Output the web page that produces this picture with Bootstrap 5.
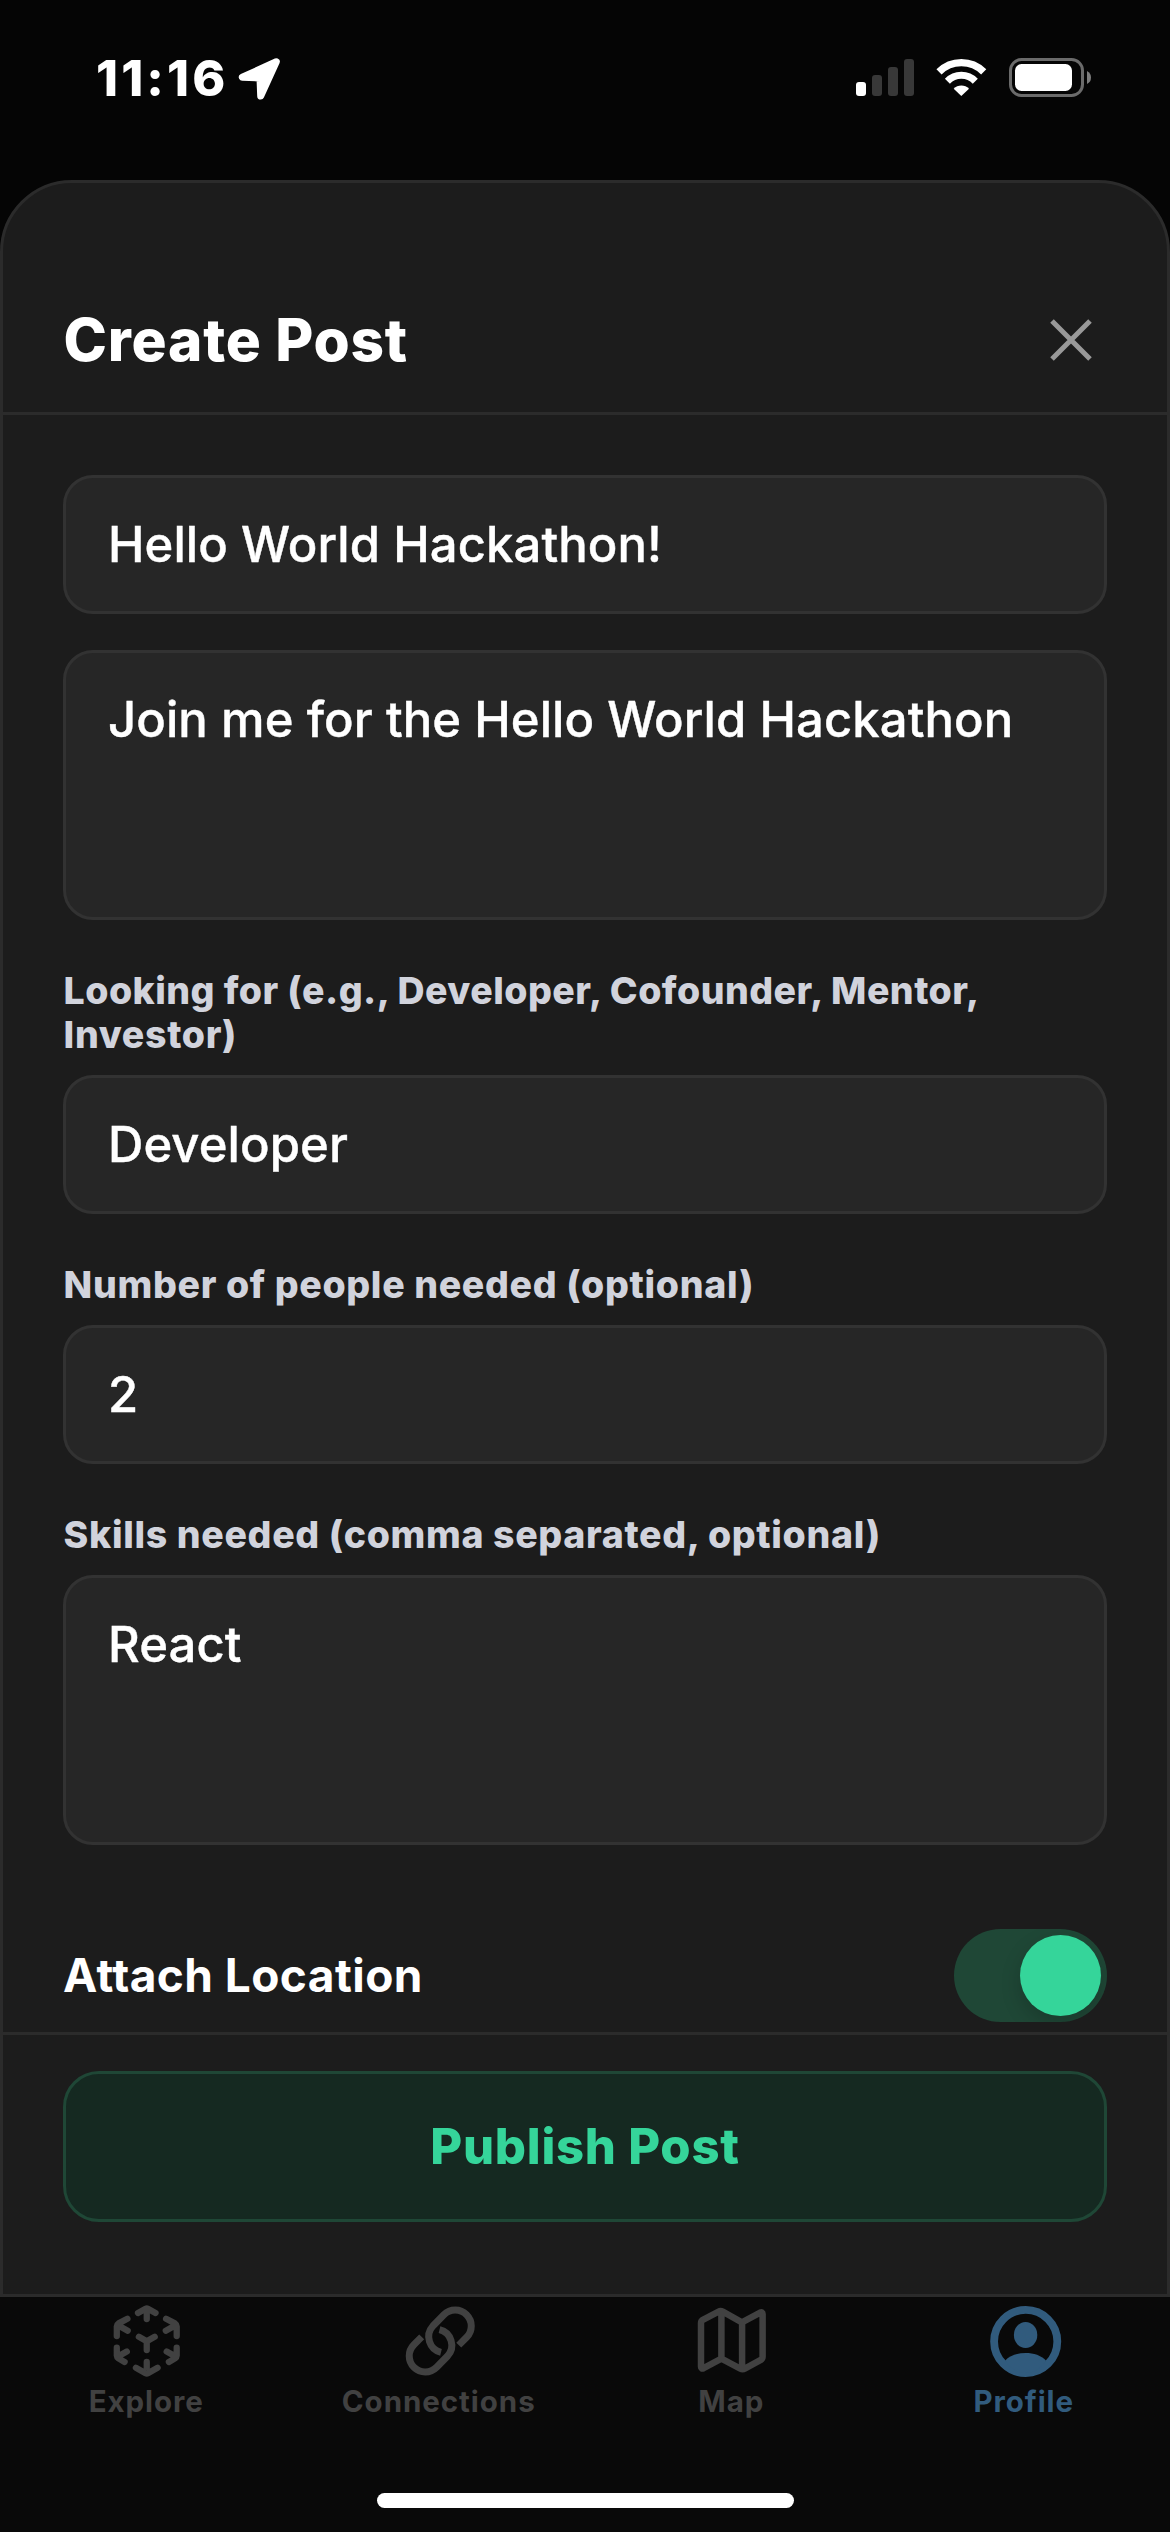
<!DOCTYPE html>
<html lang="en">
<head>
<meta charset="utf-8">
<meta name="viewport" content="width=device-width, initial-scale=1">
<title>Create Post</title>
<link rel="stylesheet" href="https://cdn.jsdelivr.net/npm/bootstrap@5.3.0/dist/css/bootstrap.min.css">
<style>
  body { background: #050505; font-family: Inter, "Liberation Sans", sans-serif; color: #fff; height: 2532px; overflow: hidden; }
  svg { display: block; flex: none; }
  .status-bar { height: 180px; padding: 48px 79px 0 96px; }
  .status-row { height: 60px; }
  .clock { font-size: 50px; line-height: 60px; font-weight: 800; letter-spacing: 3.1px; }
  .nav-arrow { margin-left: 9.5px; }
  .sheet { height: 2117px; background: #1c1c1c; border: 3px solid #2b2b2b; border-radius: 72px 72px 0 0; }
  .sheet-head { height: 232px; padding: 84px 75px 0 60.5px; border-bottom: 3px solid #2b2b2b; }
  .sheet-title { font-size: 58.5px; line-height: 72px; font-weight: 800; letter-spacing: .77px; }
  .sheet-body { padding: 60px 60px 0; height: 1617px; }
  .sheet-body .form-control { background: #262626; color: #fff; border: 3px solid #323232; border-radius: 30px; font-size: 49px; line-height: 59px; font-weight: 500; letter-spacing: .08px; -webkit-text-stroke: .4px #fff; padding: 37px 42px; height: 139px; resize: none; overflow: hidden; }
  .sheet-body textarea.form-control { height: 270px; }
  .sheet-body .second { margin-top: 36px; }
  .sheet-body .form-label { display: block; margin: 49px 0 18px .6px; font-size: 37.5px; line-height: 44px; font-weight: 800; color: #d1d3dc; letter-spacing: .66px; }
  .form-label .tight { letter-spacing: .45px; }
  .attach-row { margin-top: 84px; }
  .attach-label { font-size: 46px; line-height: 56px; font-weight: 700; letter-spacing: .44px; padding-bottom: 2px; }
  .toggle { width: 153px; height: 93px; padding: 6px; border-radius: 46.5px; background: #1f4736; overflow: hidden; }
  .toggle-knob { width: 81px; height: 81px; border-radius: 50%; background: #35d59a; box-shadow: 0 8px 20px rgba(0,0,0,.18); }
  .sheet-foot { border-top: 3px solid #2b2b2b; padding: 36px 60px 0; }
  .publish { height: 151px; border: 3px solid #1f4736; border-radius: 36px; background: #152921; color: #35d59a; font-size: 49px; line-height: 60px; font-weight: 800; letter-spacing: .73px; padding: 0; }
  .tab-bar { height: 235px; background: #090909; }
  .tab-row { padding-top: 8px; color: #414141; height: 196px; }
  .tab-item { font-size: 29.5px; line-height: 36px; font-weight: 700; letter-spacing: .95px; gap: 6px; color: #414141; text-decoration: none; }
  .tab-item.current { color: #315b7d; }
  .home-bar { width: 417px; height: 15px; border-radius: 8px; background: #fff; }
</style>
</head>
<body>
<div class="status-bar">
  <div class="status-row d-flex align-items-center justify-content-between">
    <div class="d-flex align-items-center">
      <span class="clock">11:16</span>
      <svg class="nav-arrow" width="43" height="43" viewBox="0 0 43 43"><path d="M38.3 4.7L4.3 20.3L22 21L22.7 39Z" fill="#fff" stroke="#fff" stroke-width="7" stroke-linejoin="round"/></svg>
    </div>
    <svg width="235" height="40" viewBox="0 0 235 40">
      <rect x="0" y="24" width="10" height="14" rx="3" fill="#fff"/>
      <g fill="#383838"><rect x="16" y="17" width="10" height="21" rx="3"/><rect x="32" y="9" width="10" height="29" rx="3"/><rect x="48" y="1" width="10" height="37" rx="3"/></g>
      <g transform="translate(80 0)" fill="none" stroke="#fff"><path d="M3 13.8A31.7 31.7 0 0 1 47.7 13.8" stroke-width="7.3"/><path d="M11.4 23.2A19.4 19.4 0 0 1 39.3 23.2" stroke-width="7"/><path d="M17.7 30.7A10.5 10.5 0 0 1 33 30.7L25.3 38Z" fill="#fff" stroke="none"/></g>
      <rect x="154.5" y="1.5" width="72" height="36" rx="11" fill="none" stroke="#6b6b6b" stroke-width="3"/>
      <rect x="159" y="6" width="57" height="27" rx="6.5" fill="#fff"/>
      <path d="M231 13q4 2 4 6.5t-4 6.5z" fill="#7d7d7d"/>
    </svg>
  </div>
</div>

<main class="sheet d-flex flex-column">
  <header class="sheet-head d-flex align-items-center justify-content-between">
    <h1 class="sheet-title m-0">Create Post</h1>
    <svg width="42" height="42" viewBox="0 0 42 42"><path d="M2 2L40 40M40 2L2 40" stroke="#999" stroke-width="5"/></svg>
  </header>
  <form class="sheet-body">
    <input class="form-control" type="text" value="Hello World Hackathon!">
    <textarea class="form-control second">Join me for the Hello World Hackathon</textarea>
    <label class="form-label"><span class="tight">Looking for (e.g., Developer, Cofounder, Mentor,</span> Investor)</label>
    <input class="form-control" type="text" value="Developer">
    <label class="form-label">Number of people needed (optional)</label>
    <input class="form-control" type="text" value="2">
    <label class="form-label">Skills needed (comma separated, optional)</label>
    <textarea class="form-control">React</textarea>
    <div class="attach-row d-flex align-items-center justify-content-between">
      <span class="attach-label">Attach Location</span>
      <div class="toggle d-flex justify-content-end" role="switch" aria-checked="true"><div class="toggle-knob"></div></div>
    </div>
  </form>
  <footer class="sheet-foot">
    <button class="publish btn w-100 d-flex align-items-center justify-content-center" type="button">Publish Post</button>
  </footer>
</main>

<nav class="tab-bar d-flex flex-column align-items-center">
  <div class="tab-row row g-0 w-100 text-center">
    <a class="tab-item col-3 d-flex flex-column align-items-center">
      <svg width="72" height="72" viewBox="0 0 72 72" fill="none" stroke="currentColor" stroke-width="6.3" stroke-linecap="round" stroke-linejoin="round">
        <path d="M28 8L35.6 3.7Q36.75 3.1 37.9 3.7L45.5 8M36.75 4V14"/>
        <path d="M17.4 13.7L8.6 18.4Q6.9 19.5 6.8 21.5V31M8 20.3L17.7 25.7"/>
        <path d="M56.1 13.7L64.9 18.4Q66.6 19.5 66.7 21.5V31M65.5 20.3L55.8 25.7"/>
        <path d="M6.8 42.7V50.6Q6.9 52.4 8.4 53.4L14.6 57M8 51.5L16.8 46.5"/>
        <path d="M66.7 42.7V50.6Q66.6 52.4 65.1 53.4L58.9 57M65.5 51.5L56.7 46.5"/>
        <path d="M25.9 62.7L35.6 68.2Q36.75 68.8 37.9 68.2L47.6 62.7M36.75 57V67"/>
        <path d="M28.9 31.8L36.75 36.3L44.7 31.8M36.75 36.3V45"/>
      </svg>
      <span>Explore</span>
    </a>
    <a class="tab-item col-3 d-flex flex-column align-items-center">
      <svg width="72" height="72" viewBox="0 0 72 72" fill="none" stroke="currentColor" stroke-width="7">
        <path id="half" d="M55.8 40.1L63.6 32.3A16 16 0 0 0 40.9 9.7L29.9 21A16 16 0 0 0 38 47.3"/>
        <use href="#half" transform="rotate(180 37.25 36)"/>
      </svg>
      <span>Connections</span>
    </a>
    <a class="tab-item col-3 d-flex flex-column align-items-center">
      <svg width="72" height="72" viewBox="0 0 72 72" fill="none" stroke="currentColor" stroke-width="6.5" stroke-linejoin="round">
        <path d="M6 18.2Q6 15.9 7.8 14.8L23.6 6.6Q25.6 5.6 27.8 6.7L46.9 17.3L65.2 7.6Q67.6 6.6 67.6 9V51.5Q67.6 53.8 65.8 54.9L49.8 63.7Q47.6 64.9 45.3 63.7L26.4 53.6L8.6 63.2Q6 64.4 6 61.8ZM26.4 7V54M47.1 17V64"/>
      </svg>
      <span>Map</span>
    </a>
    <a class="tab-item current col-3 d-flex flex-column align-items-center">
      <svg width="72" height="72" viewBox="0 0 72 72" overflow="visible">
        <circle cx="37.7" cy="36.5" r="31.6" fill="none" stroke="currentColor" stroke-width="7.8"/>
        <ellipse cx="37.6" cy="30" rx="11.7" ry="13" fill="currentColor"/>
        <path d="M17.2 55.4C22 50.5 29.5 48 37.6 48S53.2 50.5 58 55.4C53 63 46 68 37.6 68S22 63 17.2 55.4Z" fill="currentColor"/>
      </svg>
      <span>Profile</span>
    </a>
  </div>
  <div class="home-bar"></div>
</nav>
<script src="https://cdn.jsdelivr.net/npm/bootstrap@5.3.0/dist/js/bootstrap.bundle.min.js"></script>
</body>
</html>
